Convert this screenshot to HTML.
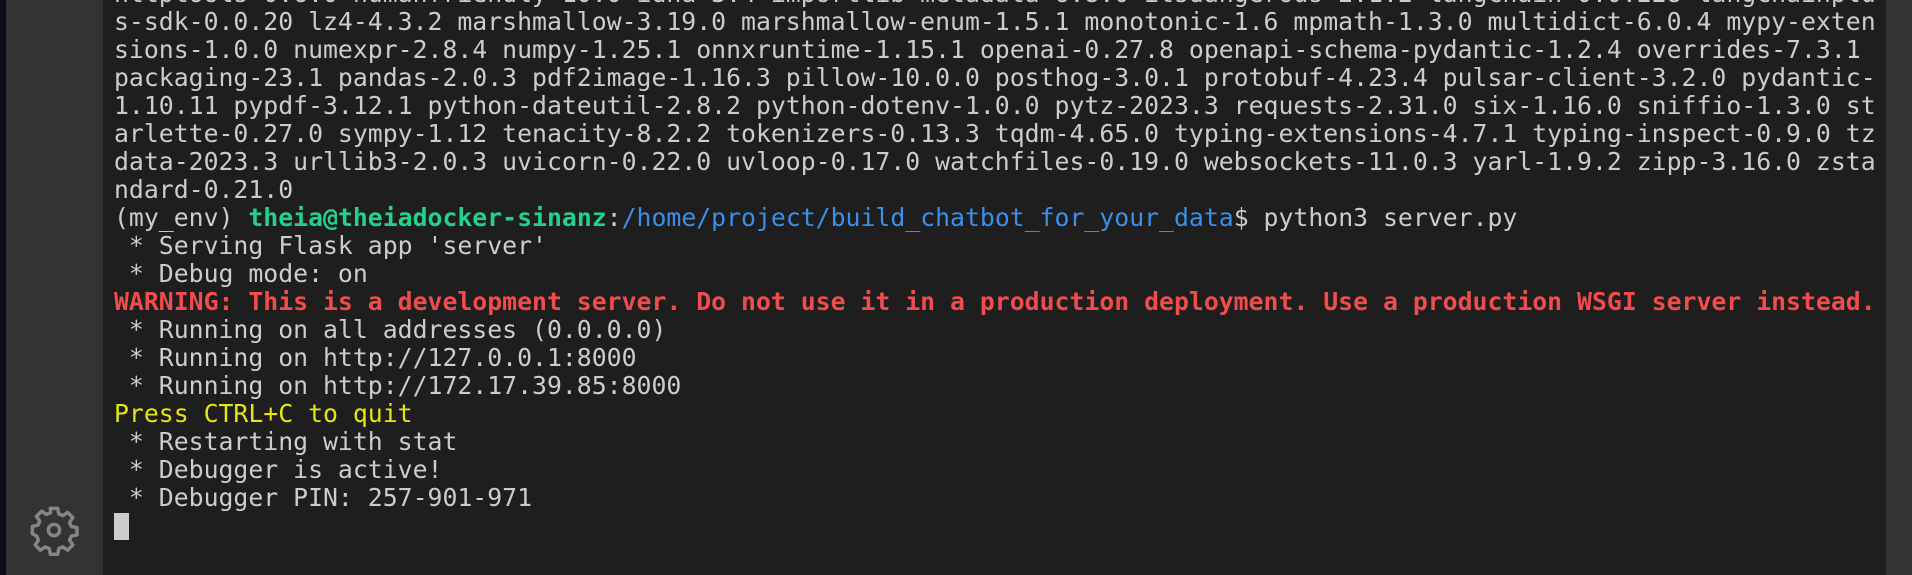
<!DOCTYPE html>
<html><head><meta charset="utf-8"><style>
html,body{margin:0;padding:0;width:1912px;height:575px;overflow:hidden;background:#1e1e1e}
.l{position:absolute;left:0;top:0;width:6px;height:575px;background:#0b0c1c}
.sb{position:absolute;left:6px;top:0;width:97px;height:575px;background:#333333}
.rs{position:absolute;left:1886px;top:0;width:26px;height:575px;background:#333333}
.t{position:absolute;left:114px;top:-20px;font-family:"DejaVu Sans Mono","Liberation Mono",monospace;font-size:24.8px;line-height:28px;color:#cccccc;white-space:pre}
.g{color:#23d18b;font-weight:bold}.b{color:#3b8eea}.r{color:#f14c4c;font-weight:bold}.y{color:#e5e510}
.cur{display:inline-block;width:15px;height:27px;background:#cccccc;vertical-align:top;margin-top:1px}
</style></head><body>
<div class="l"></div><div class="sb"></div><div class="rs"></div>
<svg style="position:absolute;left:28px;top:504px" width="52" height="52" viewBox="0 0 24 24" fill="none" stroke="#858585" stroke-width="1.6" stroke-linejoin="round">
<path d="M10.3 2h3.4l.5 2.6 1.9.8 2.2-1.5 2.4 2.4-1.5 2.2.8 1.9 2.6.5v3.4l-2.6.5-.8 1.9 1.5 2.2-2.4 2.4-2.2-1.5-1.9.8-.5 2.6h-3.4l-.5-2.6-1.9-.8-2.2 1.5-2.4-2.4 1.5-2.2-.8-1.9L2 13.7v-3.4l2.6-.5.8-1.9-1.5-2.2 2.4-2.4 2.2 1.5 1.9-.8z"/>
<circle cx="12" cy="12" r="2.6"/></svg>
<div class="t">httptools-0.6.0 humanfriendly-10.0 idna-3.4 importlib-metadata-6.8.0 itsdangerous-2.1.2 langchain-0.0.228 langchainplu
s-sdk-0.0.20 lz4-4.3.2 marshmallow-3.19.0 marshmallow-enum-1.5.1 monotonic-1.6 mpmath-1.3.0 multidict-6.0.4 mypy-exten
sions-1.0.0 numexpr-2.8.4 numpy-1.25.1 onnxruntime-1.15.1 openai-0.27.8 openapi-schema-pydantic-1.2.4 overrides-7.3.1
packaging-23.1 pandas-2.0.3 pdf2image-1.16.3 pillow-10.0.0 posthog-3.0.1 protobuf-4.23.4 pulsar-client-3.2.0 pydantic-
1.10.11 pypdf-3.12.1 python-dateutil-2.8.2 python-dotenv-1.0.0 pytz-2023.3 requests-2.31.0 six-1.16.0 sniffio-1.3.0 st
arlette-0.27.0 sympy-1.12 tenacity-8.2.2 tokenizers-0.13.3 tqdm-4.65.0 typing-extensions-4.7.1 typing-inspect-0.9.0 tz
data-2023.3 urllib3-2.0.3 uvicorn-0.22.0 uvloop-0.17.0 watchfiles-0.19.0 websockets-11.0.3 yarl-1.9.2 zipp-3.16.0 zsta
ndard-0.21.0
(my_env) <span class="g">theia@theiadocker-sinanz</span>:<span class="b">/home/project/build_chatbot_for_your_data</span>$ python3 server.py
 * Serving Flask app 'server'
 * Debug mode: on
<span class="r">WARNING: This is a development server. Do not use it in a production deployment. Use a production WSGI server instead.</span>
 * Running on all addresses (0.0.0.0)
 * Running on http://127.0.0.1:8000
 * Running on http://172.17.39.85:8000
<span class="y">Press CTRL+C to quit</span>
 * Restarting with stat
 * Debugger is active!
 * Debugger PIN: 257-901-971
<span class="cur"></span></div>
</body></html>
